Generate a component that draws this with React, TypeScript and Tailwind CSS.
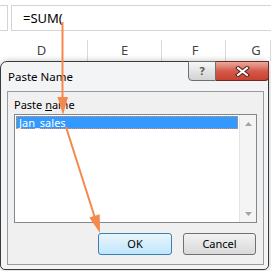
export default function App() {
  const cols = [
    { name: "D", cls: "w-[88px] pr-[4px]" },
    { name: "E", cls: "w-[74px]" },
    { name: "F", cls: "w-[64px] pl-[3px]" },
    { name: "G", cls: "flex-1 pl-[16px]" },
  ];

  return (
    <div className="relative h-[271px] w-[271px] overflow-hidden bg-white font-['Noto_Sans',sans-serif] text-black">
      {/* formula bar */}
      <div className="mt-[5px] flex h-[26px] gap-[3px]">
        <div className="w-[8px] border-y border-r border-[#d4d4d4]" />
        <div className="flex flex-1 items-center border-y border-l border-[#d4d4d4] pl-[11px] text-[13px] leading-none">
          =SUM(
        </div>
      </div>

      {/* column headers */}
      <div className="mt-[9px] flex h-[21px] text-[13px] text-[#444]">
        {cols.map((c) => (
          <div key={c.name} className={`flex items-center justify-center border-r border-[#dadada] ${c.cls}`}>
            {c.name}
          </div>
        ))}
      </div>

      {/* dialog */}
      <div className="relative h-[209px] w-[269px] rounded-t-[7px] rounded-b-[5px] border border-[#3a3a3a] bg-[#f3f4f6] shadow-[0_0_6px_rgba(0,0,0,0.25)]">
        <div className="flex h-[29px] items-center pl-[7px] text-[11.5px]">Paste Name</div>

        <div className="absolute right-[-1px] top-[-1px] flex h-[20px]">
          <div className="flex w-[28px] items-center justify-center rounded-bl-[4px] border border-[#6f6f6f] bg-gradient-to-b from-[#f7f7f7] via-[#e4e4e4] to-[#d2d2d2] text-[11px] font-bold text-[#555]">
            ?
          </div>
          <div className="flex w-[53px] items-center justify-center rounded-br-[4px] border border-l-0 border-[#6f2a22] bg-gradient-to-b from-[#e9aa9d] via-[#d35a4b] to-[#c8402e]">
            <svg width="15" height="11" viewBox="0 0 15 11">
              <path d="M3 2 L12 9 M12 2 L3 9" stroke="#4a2020" strokeWidth="4" strokeLinecap="square" />
              <path d="M3 2 L12 9 M12 2 L3 9" stroke="#ffffff" strokeWidth="2" strokeLinecap="square" />
            </svg>
          </div>
        </div>

        <div className="ml-[6px] flex h-[174px] w-[257px] flex-col border border-[#9a9a9a] bg-[#f0f0f0] pl-[6px] pt-[6px]">
          <div className="h-[14px] text-[11px] leading-[14px]">
            Paste <span className="underline">n</span>ame
          </div>
          <div className="mt-[2px] flex h-[109px] w-[243px] border border-[#828790] bg-white">
            <div className="flex-1 p-[1px]">
              <div className="flex h-[13px] items-center border border-dotted border-[#e8924a] bg-[#3399ff] pl-[2px] text-[11px] leading-none text-white">
                Jan_sales
              </div>
            </div>
            <div className="flex w-[17px] flex-col justify-between border-l border-[#e4e4e4] bg-[#f4f4f4]">
              <div className="flex h-[17px] items-center justify-center">
                <svg width="7" height="4" viewBox="0 0 7 4">
                  <path d="M0 4 L3.5 0 L7 4 Z" fill="#a3a3a3" />
                </svg>
              </div>
              <div className="flex h-[17px] items-center justify-center">
                <svg width="7" height="4" viewBox="0 0 7 4">
                  <path d="M0 0 L7 0 L3.5 4 Z" fill="#a3a3a3" />
                </svg>
              </div>
            </div>
          </div>
          <div className="mr-[7px] mt-[10px] flex justify-end gap-[11px] text-[11px]">
            <button className="h-[22px] w-[74px] rounded-[3px] border border-[#3c7fb1] bg-gradient-to-b from-[#eaf6fd] to-[#bee6fd]">
              OK
            </button>
            <button className="h-[22px] w-[73px] rounded-[3px] border border-[#707070] bg-gradient-to-b from-[#f2f2f2] to-[#d9d9d9]">
              Cancel
            </button>
          </div>
        </div>
      </div>

      {/* annotation arrows */}
      <svg className="pointer-events-none absolute left-0 top-0" width="271" height="271" viewBox="0 0 271 271">
        <line x1="62.5" y1="22" x2="62.5" y2="100" stroke="#f5884a" strokeWidth="2" />
        <polygon points="57.5,97 68,97 63,115" fill="#f5884a" />
        <line x1="66" y1="127" x2="95" y2="218" stroke="#f5884a" strokeWidth="2" />
        <polygon points="99.7,214.2 89.3,217.6 100,233" fill="#f5884a" />
      </svg>
    </div>
  );
}
